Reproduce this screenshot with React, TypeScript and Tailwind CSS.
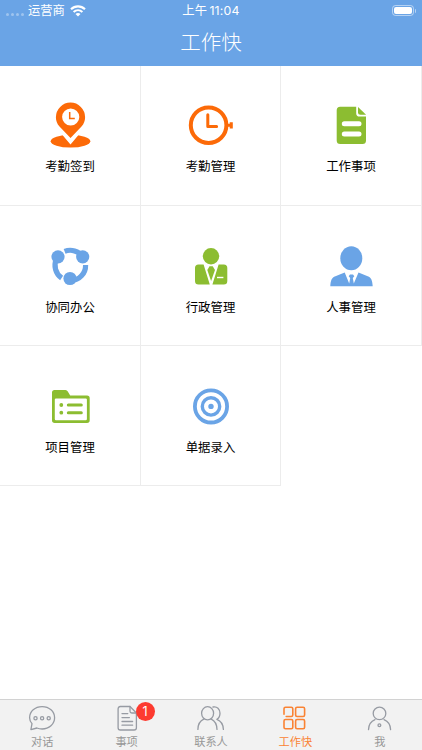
import type { ReactNode } from 'react';

const ORANGE = '#fc6a08';
const GREEN = '#8cbd31';
const BLUE = '#6aa4e6';

const menus: { label: string; icon: ReactNode }[] = [
  {
    label: '考勤签到',
    icon: (
      <>
        <ellipse cx="24.5" cy="40.2" rx="19.8" ry="6.4" fill={ORANGE} />
        <path d="M14.5 30.5L24.5 42.3L34.5 30.5Z" fill="#fff" stroke="#fff" strokeWidth="1.5" />
        <path
          d="M24.5 37L13.5 25.5C11 22.8 9.9 19.5 9.9 16.2a14.6 14.6 0 0 1 29.2 0C39.1 19.5 38 22.8 35.5 25.5Z"
          fill={ORANGE}
        />
        <circle cx="24.7" cy="16" r="8.6" fill="#fff" />
        <path d="M23.7 11V17.4H28.8" fill="none" stroke={ORANGE} strokeWidth="1.5" />
      </>
    ),
  },
  {
    label: '考勤管理',
    icon: (
      <>
        <circle cx="21.6" cy="24.2" r="17.8" fill="none" stroke={ORANGE} strokeWidth="4" />
        <path d="M20.8 13.8V25.4H29.6" fill="none" stroke={ORANGE} strokeWidth="3" strokeLinecap="round" strokeLinejoin="round" />
        <path d="M40.5 22.8H42.7V21.2H45.8V27.4H42.7V25.8H40.5Z" fill={ORANGE} />
      </>
    ),
  },
  {
    label: '工作事项',
    icon: (
      <>
        <path
          d="M13.2 5.7H29.2V12.2Q29.2 15.6 32.6 15.6H39V39.5Q39 43 35.5 43H13.2Q9.7 43 9.7 39.5V9.2Q9.7 5.7 13.2 5.7Z"
          fill={GREEN}
        />
        <path d="M31 6L39.1 13.8H33.5Q31 13.8 31 11.3Z" fill={GREEN} />
        <path d="M17.3 22.8H32M17.3 33H32" stroke="#fff" strokeWidth="5" strokeLinecap="round" />
      </>
    ),
  },
  {
    label: '协同办公',
    icon: (
      <>
        <g fill="none" stroke={BLUE} strokeWidth="5.2">
          <path d="M18.6 9.3A15.3 15.3 0 0 1 36.7 14.8" />
          <path d="M39.6 23A15.3 15.3 0 0 1 25 38.7" />
          <path d="M15.6 36A15.3 15.3 0 0 1 10.6 16.7" />
        </g>
        <circle cx="12" cy="14.8" r="6.6" fill={BLUE} />
        <circle cx="36.7" cy="14.8" r="6.6" fill={BLUE} />
        <circle cx="24" cy="36.5" r="6.6" fill={BLUE} />
      </>
    ),
  },
  {
    label: '行政管理',
    icon: (
      <>
        <circle cx="24" cy="14.2" r="8.2" fill={GREEN} />
        <path
          d="M11.5 22.5H16.6L22.8 42.5H11.5Q8 42.5 8 39V26Q8 22.5 11.5 22.5ZM31.6 22.5H36.8Q40.3 22.5 40.3 26V39Q40.3 42.5 36.8 42.5H25.4Z"
          fill={GREEN}
        />
        <path d="M22.5 24.2H25.7L28 28L24.1 39L20.3 28Z" fill={GREEN} />
        <path d="M30 35.5H36.4" stroke="#fff" strokeWidth="1.4" />
      </>
    ),
  },
  {
    label: '人事管理',
    icon: (
      <>
        <ellipse cx="24.3" cy="16.2" rx="11" ry="12" fill={BLUE} />
        <path
          d="M3.3 44.3C3.6 38.5 4.7 35.7 8.4 34.3L17.7 30.4L22.2 41.5L23.2 36L21.7 34.2L23 32.4H26L27.3 34.2L25.8 36L26.8 41.5L31.5 30.4L40.7 34.3C44.3 35.7 45.4 38.5 45.7 44.3Z"
          fill={BLUE}
        />
      </>
    ),
  },
  {
    label: '项目管理',
    icon: (
      <>
        <path
          d="M8.5 8H19.5Q21 8 21.8 9.6L24.2 13.6H41Q43.7 13.6 43.7 16.3V38.3Q43.7 41 41 41H8.7Q6 41 6 38.3V10.5Q6 8 8.5 8ZM10 16.4Q8.8 16.4 8.8 17.6V37Q8.8 38.2 10 38.2H39.7Q40.9 38.2 40.9 37V17.6Q40.9 16.4 39.7 16.4Z"
          fill={GREEN}
          fillRule="evenodd"
        />
        <circle cx="15.3" cy="23" r="1.9" fill={GREEN} />
        <circle cx="15.3" cy="30.7" r="1.9" fill={GREEN} />
        <path d="M22.3 23H35.3M22.3 30.7H35.3" stroke={GREEN} strokeWidth="3" strokeLinecap="round" />
      </>
    ),
  },
  {
    label: '单据录入',
    icon: (
      <>
        <circle cx="24" cy="24.4" r="16.1" fill="none" stroke={BLUE} strokeWidth="3.8" />
        <circle cx="24" cy="24.4" r="8.7" fill="none" stroke={BLUE} strokeWidth="3.4" />
        <circle cx="24" cy="24.4" r="2.7" fill={BLUE} />
      </>
    ),
  },
];

const tabs: { label: string; icon: ReactNode; badge?: number; active?: boolean }[] = [
  {
    label: '对话',
    icon: (
      <>
        <path d="M3.9 25.6L5 19.6C3.4 17.9 2.6 16 2.6 13.8C2.6 7.4 8 2.6 15.1 2.6S27.6 7.4 27.6 13.8S22 25 15.1 25C13.3 25 11.4 24.6 9.9 24Z" />
        <circle cx="8.5" cy="14.2" r="1.6" />
        <circle cx="15.1" cy="14.2" r="1.6" />
        <circle cx="21.7" cy="14.2" r="1.6" />
      </>
    ),
  },
  {
    label: '事项',
    badge: 1,
    icon: (
      <>
        <path d="M8.3 2.5H18L24.4 9V23.7Q24.4 26 22.1 26H8.3Q6.1 26 6.1 23.7V4.8Q6.1 2.5 8.3 2.5Z" />
        <path d="M18 2.5V7.2Q18 9 19.8 9H24.4" />
        <path d="M10 9.6H15.8M10 13.6H17.4M10 17.5H20.6M10 21.2H20.6" />
      </>
    ),
  },
  {
    label: '联系人',
    icon: (
      <>
        <ellipse cx="11.6" cy="9.3" rx="6" ry="6.6" />
        <path d="M1.9 25.4C2 19.8 4.2 16.8 7.8 15.2M15.2 15.2C18.8 16.8 20.8 19.8 21 25.4" />
        <path d="M17 3C21 2 24 5.2 24 9.3C24 11.8 22.9 14.2 20.9 15.4C25 17 27.2 20 27.4 25.4" />
      </>
    ),
  },
  {
    label: '工作快',
    active: true,
    icon: (
      <>
        <path d="M4 10.2V4.8Q4 3.2 5.6 3.2H11.2Q12.8 3.2 12.8 4.8V10.9Q12.8 12.5 11.2 12.5H6.2" />
        <rect x="15.6" y="3.2" width="9" height="9.3" rx="1.5" />
        <rect x="4" y="15.5" width="8.8" height="9.3" rx="1.5" />
        <rect x="15.6" y="15.5" width="9" height="9.3" rx="1.5" />
      </>
    ),
  },
  {
    label: '我',
    icon: (
      <>
        <circle cx="14.5" cy="9.4" r="6.3" />
        <path d="M3.5 25.6C3.7 20.5 6 17.2 10 15.6M19 15.6C23 17.2 25.4 20.5 25.6 25.6" />
        <circle cx="14.4" cy="21.3" r="1.4" />
      </>
    ),
  },
];

function StatusBar() {
  return (
    <div className="grid h-[21px] grid-cols-3 items-center px-[6px] text-[12.3px] leading-[21px]">
      <div className="flex items-center">
        <div className="flex w-[22px] gap-[2px] pt-[7px]">
          {[0, 1, 2, 3].map((i) => (
            <span key={i} className="size-[3px] rounded-full bg-white/35" />
          ))}
        </div>
        <span>运营商</span>
        <svg className="ml-[5px]" width="16" height="12" viewBox="0 0 16 12" fill="none" stroke="#fff" strokeWidth="2.1">
          <path d="M1 4.3C5 .4 11 .4 15 4.3" />
          <path d="M3.6 7C6.2 4.6 9.8 4.6 12.4 7" />
          <path d="M8 11.5L5.5 8.9C7 7.6 9 7.6 10.5 8.9Z" fill="#fff" stroke="none" />
        </svg>
      </div>
      <div className="text-center whitespace-nowrap">
        上午 <span className="-ml-px tracking-[0.2px]">11:04</span>
      </div>
      <div className="flex items-center justify-end">
        <div className="h-[11px] w-[22px] rounded-[3.5px] border border-white/50 p-px">
          <div className="h-full rounded-[2px] bg-white" />
        </div>
        <span className="ml-px h-1 w-[1.5px] rounded-r-full bg-white/50" />
      </div>
    </div>
  );
}

export default function App() {
  return (
    <div className="flex h-[750px] w-[422px] flex-col overflow-hidden bg-white font-['Inter','Noto_Sans_CJK_SC',sans-serif] text-black">
      <header className="h-[65.6px] shrink-0 bg-[#6aa4e6] text-white">
        <StatusBar />
        <h1 className="pt-px text-center text-[20.5px] leading-[42px] font-light">工作快</h1>
      </header>

      <main className="grid flex-1 auto-rows-[140.3px] grid-cols-[141px_140px_141px] content-start">
        {menus.map((item) => (
          <div key={item.label} className="flex flex-col items-center border-r border-b border-[#ececec] pt-[35.7px]">
            <svg width="48" height="48" viewBox="0 0 48 48">
              {item.icon}
            </svg>
            <span className="mt-[9px] text-[12.4px] leading-[18px]">{item.label}</span>
          </div>
        ))}
      </main>

      <nav className="grid h-[51px] shrink-0 grid-cols-5 border-t border-[#d2d2d2] bg-[#f2f2f2]">
        {tabs.map((tab) => (
          <div
            key={tab.label}
            className={`flex flex-col items-center pt-1 ${tab.active ? 'text-[#fa8334]' : 'text-[#979ba3]'}`}
          >
            <div className="relative">
              <svg
                width="30"
                height="28"
                viewBox="0 0 30 28"
                fill="none"
                stroke="currentColor"
                strokeWidth={tab.active ? 1.6 : 1.3}
                strokeLinecap="round"
                strokeLinejoin="round"
              >
                {tab.icon}
              </svg>
              {tab.badge && (
                <span className="absolute -top-[2px] left-[24px] size-[19px] rounded-full bg-[#fd3b30] text-center text-[12.5px] leading-[19px] text-white">
                  {tab.badge}
                </span>
              )}
            </div>
            <span className={`mt-[2px] text-[11.2px] leading-4 ${tab.active ? '' : 'text-[#979797]'}`}>{tab.label}</span>
          </div>
        ))}
      </nav>
    </div>
  );
}
